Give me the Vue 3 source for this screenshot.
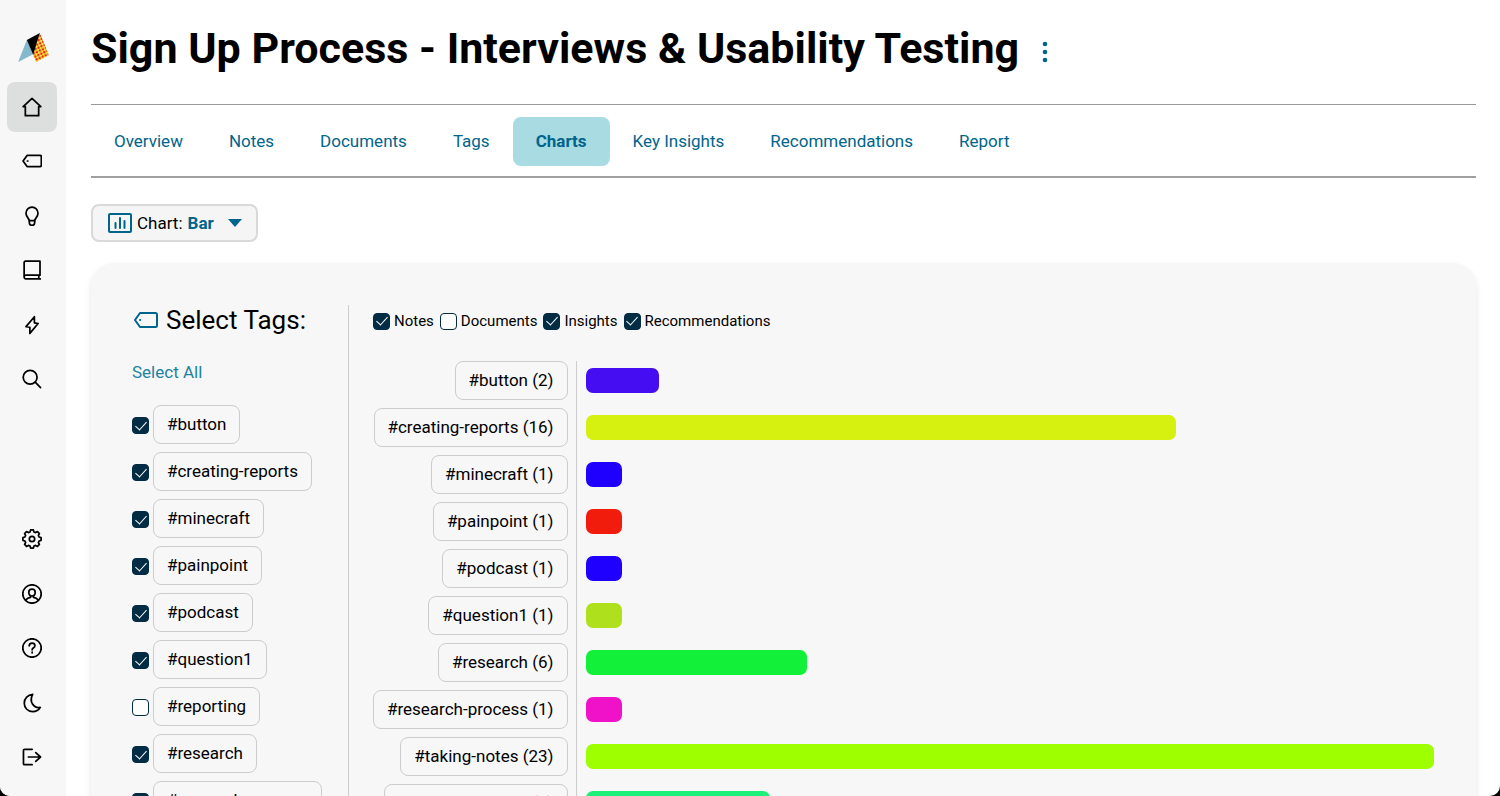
<script setup>
import { ref, computed } from 'vue'

const gear = (() => {
  const pts = []
  const teeth = 8
  for (let i = 0; i < teeth; i++) {
    const a = (i * 2 * Math.PI) / teeth
    for (const [d, r] of [[-0.27, 5.5], [-0.15, 6.9], [0.15, 6.9], [0.27, 5.5]]) {
      pts.push(`${(7.5 + r * Math.sin(a + d)).toFixed(2)} ${(7.5 - r * Math.cos(a + d)).toFixed(2)}`)
    }
  }
  return `M${pts.join('L')}z`
})()

const topNav = [
  { name: 'Home', active: true, d: ['M7.5 1L.9 7.2h1.600v6.800h10v-6.800h1.600z'] },
  { name: 'Tags', d: ['M3.800 3.300h9.700a1 1 0 011 1v6.400a1 1 0 01-1 1H3.800L.8 7.500z', 'M4 7.500h.4'] },
  { name: 'Insights', d: ['M5.500 11c0-1.700-2.500-2.400-2.500-5.600a4.500 4.500 0 019 0c0 3.200-2.500 3.900-2.500 5.600z', 'M5.500 11v1.500a2 2 0 004 0V11'] },
  { name: 'Library', d: ['M13.500 11.400V.9H2.600a1 1 0 00-1 1v10.900a1.400 1.400 0 011.400-1.400h10.500M1.600 12.800a1.400 1.400 0 001.400 1.400h10.700M12.600 11.400v2.800'] },
  { name: 'Activity', d: ['M9.300 5.900V1.300L3 8.700l2.900.5v4.600L12.100 6.400z'] },
  { name: 'Search', d: ['M11.300 6.200a5.200 5.200 0 11-10.400 0 5.200 5.200 0 0110.400 0z', 'M9.900 9.900l4 4'] }
]
const bottomNav = [
  { name: 'Settings', d: [gear, 'M9.500 7.500a2 2 0 11-4 0 2 2 0 014 0z'] },
  { name: 'Account', d: ['M14.400 7.500a6.900 6.900 0 11-13.800 0 6.900 6.900 0 0113.800 0z', 'M9.900 6.200c0 1.600-1 2.800-2.400 2.800S5.100 7.800 5.100 6.200a2.400 2.400 0 014.800 0z', 'M6.400 8.800v1.300c-1.500.3-2.700.9-3.600 2M8.600 8.800v1.300c1.500.3 2.700.9 3.600 2'] },
  { name: 'Help', d: ['M14.400 7.500a6.900 6.900 0 11-13.800 0 6.900 6.900 0 0113.800 0z', 'M5.400 5.900c.1-1.300 1-2 2.200-2s2.100.8 2.100 1.900c0 1.500-2.100 1.600-2.100 3.100', 'M7.600 10.500v.6'] },
  { name: 'Dark mode', d: ['M8 1C4.400 1.300 1.700 4 1.700 7.600c0 3.700 2.800 6.400 6.300 6.400 2.500 0 4.600-1.200 5.700-3.200C8.700 11.700 5.100 6.500 8 1z'] },
  { name: 'Log out', d: ['M7.600 1.700H1.900a.8.8 0 00-.8.8v10a.8.8 0 00.8.8h5.700', 'M4.800 7.500h9M10.300 4.200l3.600 3.300-3.600 3.300'] }
]

const tabs = ['Overview', 'Notes', 'Documents', 'Tags', 'Charts', 'Key Insights', 'Recommendations', 'Report']
const activeTab = 'Charts'
const chartType = ref('Bar')

const tags = ref([
  { name: '#button', on: true, count: 2, color: '#440df2' },
  { name: '#creating-reports', on: true, count: 16, color: '#d6f00f' },
  { name: '#minecraft', on: true, count: 1, color: '#1f00ff' },
  { name: '#painpoint', on: true, count: 1, color: '#f21c0d' },
  { name: '#podcast', on: true, count: 1, color: '#1f00ff' },
  { name: '#question1', on: true, count: 1, color: '#aee01c' },
  { name: '#reporting', on: false, count: 3, color: '#1c9be0' },
  { name: '#research', on: true, count: 6, color: '#12f03a' },
  { name: '#research-process', on: true, count: 1, color: '#f012c8' },
  { name: '#taking-notes', on: true, count: 23, color: '#9dff00' },
  { name: '#usability-testing', on: true, count: 5, color: '#1cf078' }
])
const sources = ref([
  { name: 'Notes', on: true },
  { name: 'Documents', on: false },
  { name: 'Insights', on: true },
  { name: 'Recommendations', on: true }
])

const charted = computed(() => tags.value.filter((t) => t.on))
const max = computed(() => Math.max(1, ...charted.value.map((t) => t.count)))
const selectAll = () => tags.value.forEach((t) => { t.on = true })
</script>

<template>
  <div class="app">
    <aside class="sidebar">
      <a href="#" class="logo" aria-label="Dashboard">
        <svg viewBox="54 39 92 87" width="31" height="29">
          <defs>
            <pattern id="dots" width="14" height="14" patternUnits="userSpaceOnUse" patternTransform="rotate(20)">
              <rect width="14" height="14" fill="#f7e93a" />
              <circle cx="3.500" cy="3.500" r="3.700" fill="#e81c1c" />
              <circle cx="10.500" cy="10.500" r="3.700" fill="#e81c1c" />
            </pattern>
          </defs>
          <path d="M54 126L80 60l19 43z" fill="#84b8cc" />
          <path d="M119 39l27 67-38 20-10-22z" fill="url(#dots)" />
          <path d="M80 60l39-21-20 65z" fill="#000" />
        </svg>
      </a>
      <nav class="rail" aria-label="Primary">
        <a v-for="i in topNav" :key="i.name" href="#" class="rail-item" :class="{ active: i.active }" :aria-label="i.name">
          <svg class="icon" viewBox="0 0 15 15"><path v-for="d in i.d" :key="d" :d="d" /></svg>
        </a>
      </nav>
      <nav class="rail rail-end" aria-label="Secondary">
        <a v-for="i in bottomNav" :key="i.name" href="#" class="rail-item" :aria-label="i.name">
          <svg class="icon" viewBox="0 0 15 15"><path v-for="d in i.d" :key="d" :d="d" /></svg>
        </a>
      </nav>
    </aside>

    <main class="main">
      <header class="header">
        <h1>Sign Up Process - Interviews &amp; Usability Testing</h1>
        <button class="more" type="button" aria-label="More options">
          <svg viewBox="0 0 6 22" width="6" height="22">
            <circle cx="3" cy="3" r="2.300" /><circle cx="3" cy="11" r="2.300" /><circle cx="3" cy="19" r="2.300" />
          </svg>
        </button>
      </header>

      <nav class="tabs" aria-label="Project sections">
        <a v-for="t in tabs" :key="t" href="#" class="tab" :class="{ active: t === activeTab }">{{ t }}</a>
      </nav>

      <div class="chart-type">
        <svg class="icon blue" viewBox="0 0 24 20" width="24" height="20">
          <rect x="1" y="1" width="22" height="18" rx="1" />
          <path d="M7.500 10v5M12 5v10M16.500 8v7" />
        </svg>
        <label for="chart-type">Chart:</label>
        <span class="select-wrap">
          <select id="chart-type" v-model="chartType"><option>Bar</option><option>Pie</option></select>
          <svg class="caret" viewBox="0 0 14 8" width="14" height="8"><path d="M0 0h14L7 8z" /></svg>
        </span>
      </div>

      <section class="panel">
        <div class="picker">
          <h2>
            <svg class="icon blue" viewBox="0 0 24 16" width="24" height="16">
              <path d="M6 1h15.500a1.500 1.500 0 011.500 1.500v11a1.500 1.500 0 01-1.500 1.500H6L1 8z" /><path d="M6 8h.2" />
            </svg>
            Select Tags:
          </h2>
          <button class="select-all" type="button" @click="selectAll">Select All</button>
          <ul class="tag-list">
            <li v-for="t in tags" :key="t.name">
              <label class="pick"><input v-model="t.on" type="checkbox" class="box" /><span class="pill">{{ t.name }}</span></label>
            </li>
          </ul>
        </div>

        <div class="chart">
          <div class="sources">
            <label v-for="s in sources" :key="s.name" class="source"><input v-model="s.on" type="checkbox" class="box" />{{ s.name }}</label>
          </div>
          <div class="plot">
            <div class="labels">
              <span v-for="t in charted" :key="t.name" class="pill">{{ t.name }} ({{ t.count }})</span>
            </div>
            <div class="bars">
              <div v-for="t in charted" :key="t.name" class="bar-row">
                <div class="bar" :style="{ width: (t.count / max) * 100 + '%', background: t.color }"></div>
              </div>
            </div>
          </div>
        </div>
      </section>
    </main>
  </div>
</template>

<style>
body {
  margin: 0;
  background: #000;
}
</style>

<style scoped>
* {
  box-sizing: border-box;
}
.app {
  display: flex;
  height: 100vh;
  overflow: hidden;
  background: #fff;
  border-radius: 0 0 10px 10px;
  font-family: Roboto, "Liberation Sans", sans-serif;
  font-size: 17px;
  color: #000;
}
.sidebar {
  flex: none;
  width: 66px;
  display: flex;
  flex-direction: column;
  padding: 33px 9px 14px 7px;
  background: #f7f7f7;
}
.logo {
  display: block;
  height: 29px;
  margin: 0 0 20px 11px;
}
.logo svg {
  display: block;
}
.rail {
  display: flex;
  flex-direction: column;
  justify-content: space-between;
  height: 322px;
}
.rail-end {
  height: 268px;
  margin-top: auto;
}
.rail-item {
  width: 50px;
  height: 50px;
  display: grid;
  place-items: center;
  border-radius: 8px;
}
.rail-item.active {
  background: #dddede;
}
.rail-item .icon {
  width: 20px;
  height: 20px;
}
.icon {
  fill: none;
  stroke: #000;
  stroke-width: 1.3;
  stroke-linejoin: round;
  stroke-linecap: round;
}
.icon.blue {
  flex: none;
  stroke: #00648c;
  stroke-width: 2;
}
.main {
  flex: 1;
  min-width: 0;
  padding: 22px 24px 0 25px;
}
.header {
  display: flex;
  align-items: center;
  gap: 16px;
  height: 52px;
}
h1 {
  margin: 0;
  font-size: 43px;
  line-height: 52px;
  font-weight: 700;
  white-space: nowrap;
}
.more {
  display: grid;
  place-items: center;
  width: 20px;
  height: 32px;
  margin-top: 8px;
  padding: 0;
  border: 0;
  background: none;
  fill: #00648c;
}
.tabs {
  display: flex;
  margin-top: 30px;
  padding: 12px 0 10px;
  border-top: 1px solid #999;
  border-bottom: 2px solid #a0a0a0;
}
.tab {
  padding: 0 23px;
  line-height: 49px;
  border-radius: 8px;
  color: #00648c;
  text-decoration: none;
  white-space: nowrap;
}
.tab.active {
  background: #a9dbe2;
  font-weight: 700;
}
.chart-type {
  display: flex;
  align-items: center;
  width: max-content;
  height: 38px;
  margin-top: 26px;
  padding: 0 14px 0 15px;
  border: 2px solid #d9d9d9;
  border-radius: 8px;
  background: #f5f5f5;
}
.chart-type label {
  margin: 0 5px;
}
.select-wrap {
  position: relative;
  display: flex;
  align-items: center;
}
select {
  appearance: none;
  width: 54px;
  padding: 0;
  border: 0;
  background: none;
  font: inherit;
  font-weight: 700;
  color: #00648c;
}
.caret {
  position: absolute;
  right: 0;
  fill: #00648c;
  pointer-events: none;
}
.panel {
  display: flex;
  align-items: stretch;
  margin-top: 21px;
  padding: 42px 42px 42px 41px;
  border-radius: 24px;
  background: #f7f7f7;
  box-shadow: 0 3px 6px rgba(0, 0, 0, 0.1);
}
.picker {
  flex: none;
  width: 217px;
  border-right: 1px solid #ccc;
}
h2 {
  display: flex;
  align-items: center;
  gap: 8px;
  margin: 0;
  padding-left: 2px;
  font-size: 26px;
  line-height: 30px;
  font-weight: 400;
}
.select-all {
  display: block;
  margin-top: 25px;
  padding: 0;
  border: 0;
  background: none;
  font: inherit;
  line-height: 24px;
  color: #1c83a3;
}
.tag-list {
  display: flex;
  flex-direction: column;
  gap: 8px;
  margin: 21px 0 0;
  padding: 0;
  list-style: none;
}
.tag-list li,
.pick {
  display: flex;
  align-items: center;
}
.pick {
  gap: 4px;
}
.pick .box {
  margin-top: 2px;
}
.box {
  appearance: none;
  flex: none;
  display: grid;
  place-items: center;
  width: 17px;
  height: 17px;
  margin: 0;
  border: 1px solid #022c43;
  border-radius: 4px;
  background: #fff;
}
.box:checked {
  background: #022c43;
}
.box:checked::after {
  content: "";
  width: 5px;
  height: 10px;
  margin-bottom: 3px;
  border: solid #fff;
  border-width: 0 1px 1px 0;
  transform: rotate(42deg);
}
.pill {
  height: 39px;
  padding: 0 13px;
  border: 1px solid #ccc;
  border-radius: 8px;
  line-height: 37px;
  white-space: nowrap;
}
.chart {
  flex: 1;
  min-width: 0;
  padding-left: 24px;
}
.sources {
  display: flex;
  gap: 6px;
  height: 32px;
  font-size: 15px;
}
.source {
  display: flex;
  align-items: center;
  gap: 4px;
}
.plot {
  display: flex;
  margin-top: 24px;
}
.labels {
  display: flex;
  flex-direction: column;
  align-items: flex-end;
  gap: 8px;
  padding-right: 8px;
}
.bars {
  flex: 1;
  display: flex;
  flex-direction: column;
  gap: 8px;
  padding-left: 9px;
  border-left: 1px solid #ccc;
}
.bar-row {
  display: flex;
  align-items: center;
  height: 39px;
}
.bar {
  height: 25px;
  border-radius: 7px;
}
</style>
